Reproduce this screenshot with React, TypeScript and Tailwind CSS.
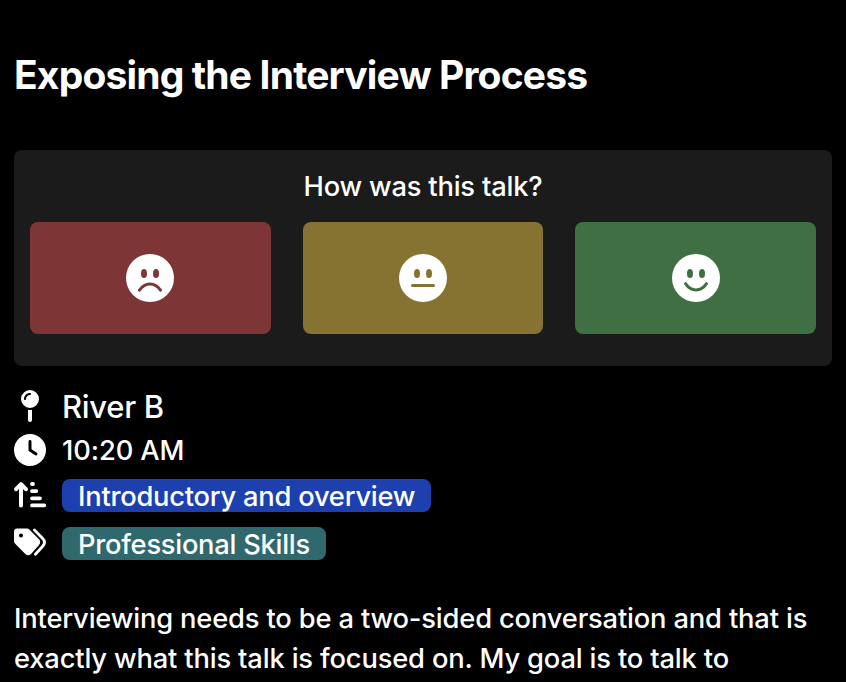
import React from "react";
import { FaClock, FaMapPin } from "react-icons/fa6";

type Mood = "sad" | "neutral" | "happy";

const mouths: Record<Mood, string> = {
  sad: "M13.5 36.2C16 32.5 19.5 30 24 30S32 32.5 34.5 36.2",
  neutral: "M13.5 31.4H34.5",
  happy: "M13.5 29.7C16 33.4 19.5 35.9 24 35.9S32 33.4 34.5 29.7",
};

function Face({ mood, ink }: { mood: Mood; ink: string }) {
  return (
    <svg viewBox="0 0 48 48" className={`h-12 w-12 ${ink}`} aria-hidden="true">
      <circle cx="24" cy="24" r="24" fill="white" />
      <ellipse cx="18" cy="19.5" rx="3" ry="4.6" fill="currentColor" />
      <ellipse cx="30" cy="19.5" rx="3" ry="4.6" fill="currentColor" />
      <path d={mouths[mood]} fill="none" stroke="currentColor" strokeWidth="3" strokeLinecap="round" />
    </svg>
  );
}

function SortIcon() {
  return (
    <svg viewBox="0 0 32 32" className="h-8 w-8" fill="none" stroke="white" strokeLinecap="round" strokeLinejoin="round" aria-hidden="true">
      <path d="M7 25.4V4.5M2.1 9.2L7 4L11.9 9.2" strokeWidth="4" />
      <path d="M18 4H19M18 11.1H22.3M18 18.3H26M18 25.4H30.2" strokeWidth="3.8" />
    </svg>
  );
}

function TagsIcon() {
  return (
    <svg viewBox="0 0 32 32" className="h-8 w-8" aria-hidden="true">
      <path fill="white" fillRule="evenodd" d="M0 3.6A3 3 0 0 1 3 .6H12.8A4 4 0 0 1 15.6 1.8L25 11.2A4 4 0 0 1 25 16.9L17.3 25.8A4 4 0 0 1 11.6 26.2L1.2 15.8A4 4 0 0 1 0 13ZM7 5.6A2 2 0 1 0 7 9.6A2 2 0 1 0 7 5.6Z" />
      <path d="M20.4 1.9L28.5 10.2Q32.5 14.3 28.5 18.5L21.4 26.3" fill="none" stroke="white" strokeWidth="2.8" strokeLinecap="round" />
    </svg>
  );
}

const ratings: { mood: Mood; color: string; ink: string }[] = [
  { mood: "sad", color: "bg-[#7d3635]", ink: "text-[#7d3635]" },
  { mood: "neutral", color: "bg-[#867332]", ink: "text-[#867332]" },
  { mood: "happy", color: "bg-[#3f6f42]", ink: "text-[#3f6f42]" },
];

export default function App() {
  return (
    <main className="h-[682px] overflow-hidden bg-black px-[14px] font-['Inter',sans-serif] font-medium text-white">
      <h1 className="pt-[50px] text-[39px] leading-[50px] font-bold whitespace-nowrap tracking-[-0.84px]">Exposing the Interview Process</h1>
      <section className="mt-[50px] h-[216px] rounded-lg bg-[#1b1b1b] px-4 pt-[17px]">
        <h2 className="text-center text-[27.3px] leading-10 tracking-[-0.2px]">How was this talk?</h2>
        <div className="mt-[15px] grid grid-cols-3 gap-8">
          {ratings.map(({ mood, color, ink }) => (
            <button key={mood} aria-label={mood} className={`flex h-28 items-center justify-center rounded-lg ${color}`}>
              <Face mood={mood} ink={ink} />
            </button>
          ))}
        </div>
      </section>
      <div className="mt-5 flex h-10 items-center gap-4"><FaMapPin size={32} /><span className="pt-0.5 text-[31px] tracking-[-0.3px]">River B</span></div>
      <div className="mt-1 flex h-10 items-center gap-4"><FaClock size={32} /><span className="pt-[2px] text-[27.3px] tracking-[-0.1px]">10:20 AM</span></div>
      <div className="mt-[9px] flex h-[33px] items-center gap-4"><SortIcon /><span className="h-[33px] rounded-lg bg-[#1e40af] px-4 text-[27.3px] leading-[35px] tracking-[-0.24px]">Introductory and overview</span></div>
      <div className="mt-[15px] flex h-[33px] items-center gap-4"><TagsIcon /><span className="h-[33px] rounded-lg bg-[#2f696d] px-4 text-[27.3px] leading-[35px] tracking-[-0.26px]">Professional Skills</span></div>
      <p className="mt-[39px] text-[27.3px] leading-10 whitespace-nowrap tracking-[-0.16px]">Interviewing needs to be a two-sided conversation and that is<br />exactly what this talk is focused on. My goal is to talk to</p>
    </main>
  );
}
